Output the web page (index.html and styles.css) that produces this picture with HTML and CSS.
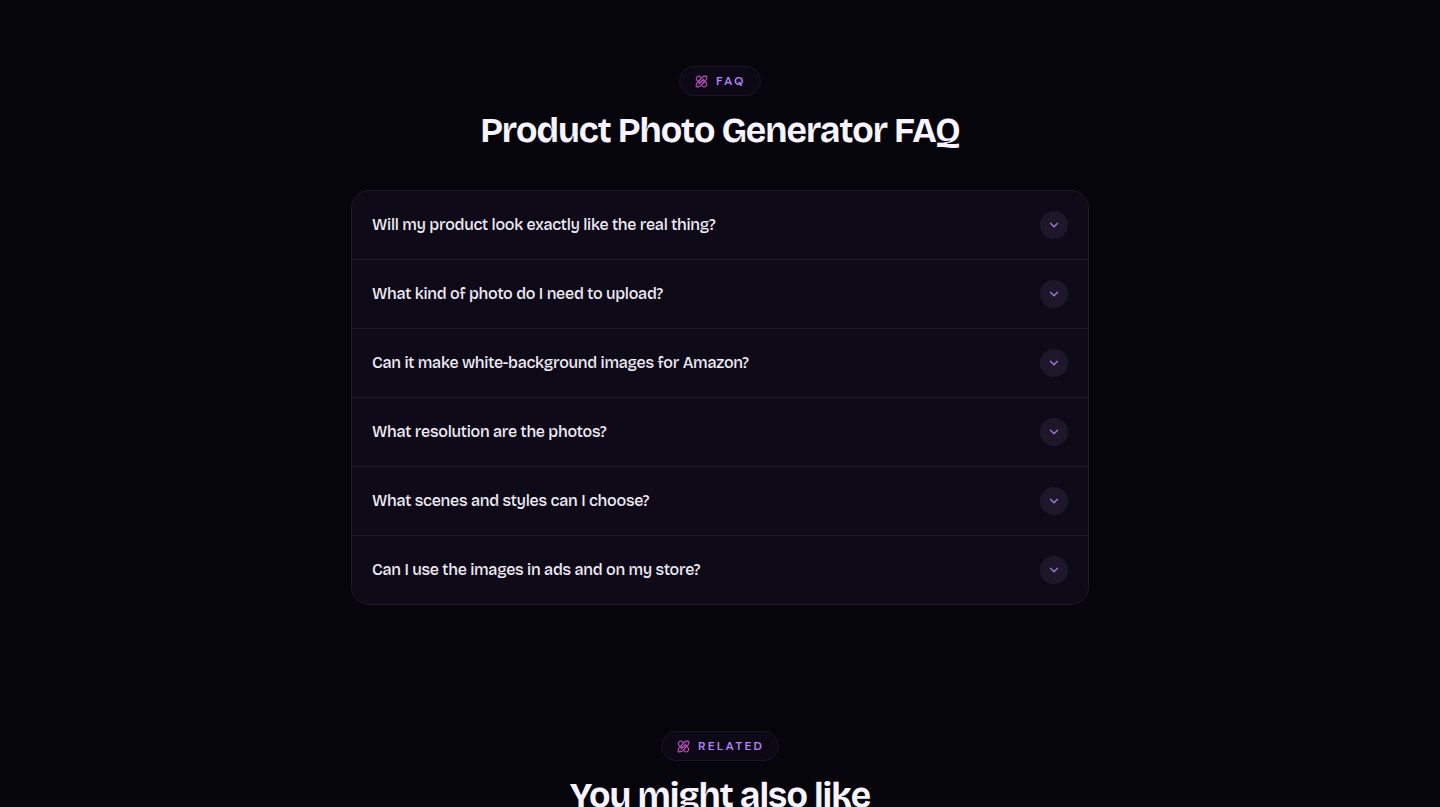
FILE: index.html
```html
<!DOCTYPE html>
<html lang="en">
<head>
<meta charset="utf-8">
<title>Product Photo Generator FAQ</title>
<link rel="stylesheet" href="styles.css">
</head>
<body>
<svg class="sprite" aria-hidden="true">
  <defs>
    <linearGradient id="brand" x1="0" y1="0" x2="14" y2="14" gradientUnits="userSpaceOnUse"><stop stop-color="#b45fd8"/><stop offset="1" stop-color="#d14eae"/></linearGradient>
    <symbol id="mark" viewBox="0 0 14 14"><g fill="none" stroke="url(#brand)" stroke-width="1.1" stroke-linecap="round" stroke-linejoin="round"><path d="M3 6.500C.9 5.500.9 3.300 2.300 2C3.700.7 5.700.9 6.400 2.800M5.800 5L2.500 8.200C1 9.800 1.100 12.400 1.300 12.700C3.500 13 5 12.800 6.300 11.400L9.800 7.500C10.900 6.300 9.300 4.900 8.200 6L4.300 9.800"/><path d="M11 7.500C13.100 8.500 13.100 10.700 11.700 12C10.300 13.300 8.300 13.100 7.600 11.200M8.200 9L11.500 5.800C13 4.200 12.900 1.600 12.700 1.300C10.500 1 9 1.200 7.700 2.600L4.200 6.500C3.100 7.700 4.700 9.100 5.800 8L9.700 4.200"/></g></symbol>
    <symbol id="chevron" viewBox="0 0 24 24"><path d="M5 8.500l7 7 7-7" fill="none" stroke="currentColor" stroke-width="2.500" stroke-linecap="round" stroke-linejoin="round"/></symbol>
  </defs>
</svg>
<main class="page">
  <section class="section">
    <div class="pill"><svg class="mark"><use href="#mark"/></svg><span>FAQ</span></div>
    <h2 class="title">Product Photo Generator FAQ</h2>
    <div class="faq">
      <button class="row"><span class="q">Will my product look exactly like the real thing?</span><span class="toggle"><svg><use href="#chevron"/></svg></span></button>
      <button class="row"><span class="q">What kind of photo do I need to upload?</span><span class="toggle"><svg><use href="#chevron"/></svg></span></button>
      <button class="row"><span class="q">Can it make white-background images for Amazon?</span><span class="toggle"><svg><use href="#chevron"/></svg></span></button>
      <button class="row"><span class="q">What resolution are the photos?</span><span class="toggle"><svg><use href="#chevron"/></svg></span></button>
      <button class="row"><span class="q">What scenes and styles can I choose?</span><span class="toggle"><svg><use href="#chevron"/></svg></span></button>
      <button class="row"><span class="q">Can I use the images in ads and on my store?</span><span class="toggle"><svg><use href="#chevron"/></svg></span></button>
    </div>
  </section>
  <section class="section related">
    <div class="pill pill-related"><svg class="mark"><use href="#mark"/></svg><span>RELATED</span></div>
    <h2 class="title title-related">You might also like</h2>
  </section>
</main>
</body>
</html>
```

FILE: styles.css
```css
* { box-sizing: border-box; }
html, body { margin: 0; height: 807px; overflow: hidden; background: #06050c; }
body { color: #f7f4ff; font-family: "Bricolage Grotesque", Inter, sans-serif; font-optical-sizing: none; }
.sprite { position: absolute; width: 0; height: 0; }
.page { padding-top: 66px; }
.section { display: flex; flex-direction: column; align-items: center; }
.related { margin-top: 126px; }
.pill { display: flex; align-items: center; gap: 8.500px; width: 82px; height: 30px; padding-left: 14.500px; border: 1px solid #1b1626; border-radius: 15px; background: #0c0815; color: #b583f4; font: 600 12px/18px "DM Sans", Inter, sans-serif; letter-spacing: 2.200px; white-space: nowrap; }
.pill-related { width: 118px; }
.mark { width: 13px; height: 13px; flex: none; }
.title { margin: 15px 0 0; font-size: 35.200px; line-height: 39px; font-weight: 700; letter-spacing: -1px; white-space: nowrap; }
.faq { width: 738px; margin-top: 40px; border: 1px solid #1e1a27; border-radius: 18px; background: #0f0a17; overflow: hidden; }
.row { display: flex; align-items: center; justify-content: space-between; width: 100%; height: 69px; padding: 0 20px; border: 0; border-bottom: 1px solid #1e1a27; background: none; color: #f0edf7; font: 500 16px/24px "Bricolage Grotesque", Inter, sans-serif; }
.row:last-child { height: 68px; border-bottom: 0; }
.q { letter-spacing: -0.270px; white-space: nowrap; }
.toggle { display: flex; align-items: center; justify-content: center; width: 28px; height: 28px; border-radius: 50%; background: #1e172a; color: #a67be3; }
.toggle svg { width: 12px; height: 12px; }
```
